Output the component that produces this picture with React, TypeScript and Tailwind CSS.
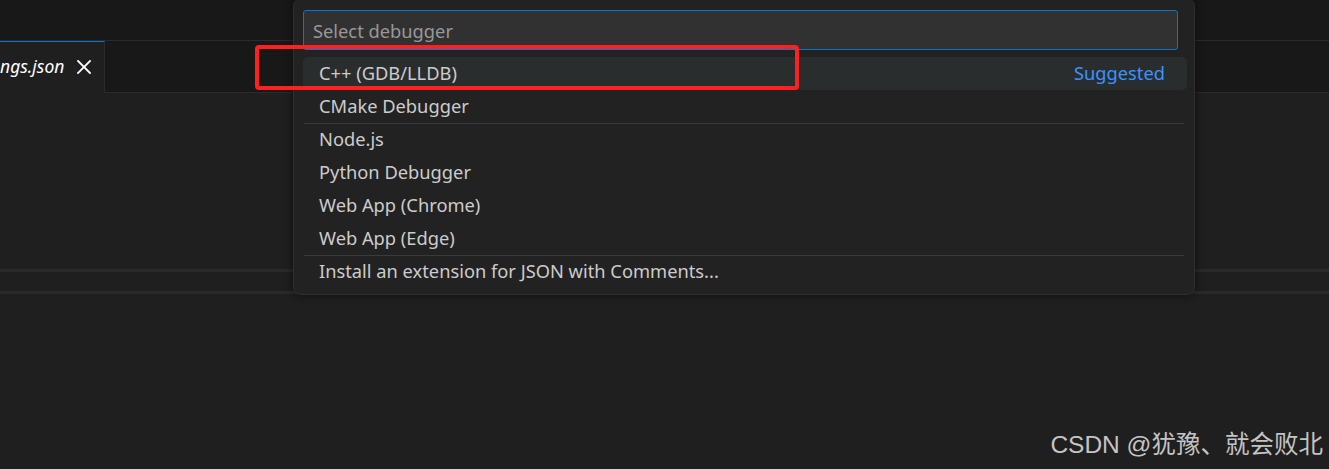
import React from "react";

const items: { label: string; sep?: boolean; active?: boolean; hint?: string }[] = [
  { label: "C++ (GDB/LLDB)", active: true, hint: "Suggested" },
  { label: "CMake Debugger" },
  { label: "Node.js", sep: true },
  { label: "Python Debugger" },
  { label: "Web App (Chrome)" },
  { label: "Web App (Edge)" },
  { label: "Install an extension for JSON with Comments...", sep: true },
];

export default function App() {
  return (
    <div
      className="relative h-[469px] w-full overflow-hidden bg-[#1f1f1f]"
      style={{ fontFamily: '"Noto Sans", "Segoe UI", sans-serif' }}
    >
      {/* title strip */}
      <div className="h-[41px] border-b border-[#2b2b2b] bg-[#181818]" />
      {/* tab bar */}
      <div className="flex h-[52px] border-b border-[#2b2b2b] bg-[#181818]">
        <div className="-mb-px flex h-[52px] w-[105px] items-center border-r border-t border-r-[#2b2b2b] border-t-[#0078d4] bg-[#1f1f1f] pb-[2px]">
          <span className="text-[17.5px] italic leading-none text-white">ngs.json</span>
          <svg className="ml-[13px]" width="14" height="14" viewBox="0 0 14 14">
            <path d="M1 1L13 13M13 1L1 13" stroke="#ffffff" strokeWidth="1.8" strokeLinecap="square" />
          </svg>
        </div>
      </div>
      {/* editor */}
      <div className="h-[176px]" />
      <div className="h-[25px] border-y-[3px] border-[#2a2a2a]" />

      {/* quick pick */}
      <div className="absolute left-[293px] top-[-2px] w-[902px] rounded-lg border border-[#2f2f2f] bg-[#222222] pb-[6px] pt-[11px] shadow-[0_0_10px_rgba(0,0,0,0.55)]">
        <div className="mx-[9px] mr-[16px] flex h-[40px] items-center rounded-[3px] border border-[#0078d4] bg-[#313131] pl-[9px]">
          <span className="pt-[2px] text-[18.3px] text-[#989898]">Select debugger</span>
        </div>
        <div className="mt-[7px] flex flex-col px-[9px] pr-[7px]">
          {items.map((it) => (
            <div key={it.label} className="flex flex-col">
              {it.sep && <div className="ml-px mr-[3px] h-px bg-[#3a3a3a]" />}
              <div
                className={
                  "flex items-center justify-between pb-[2px] pl-[16px] pr-[22px] " +
                  (it.sep ? "h-[32px] " : "h-[33px] ") +
                  (it.active ? "rounded-[5px] bg-[#2a2d2e]" : "")
                }
              >
                <span className="text-[18.3px] text-[#cccccc]">{it.label}</span>
                {it.hint && <span className="text-[18.3px] text-[#3794ff]">{it.hint}</span>}
              </div>
            </div>
          ))}
        </div>
      </div>

      {/* red annotation */}
      <div className="absolute left-[255px] top-[45px] h-[45px] w-[544px] rounded-[4px] border-[4px] border-[#ff2020]" />

      {/* watermark */}
      <div
        className="absolute right-[6px] top-[427px] text-[24.5px] text-[#c4c4c4]"
        style={{ fontFamily: '"Liberation Sans", "Noto Sans CJK SC", sans-serif' }}
      >
        CSDN @犹豫、就会败北
      </div>
    </div>
  );
}
